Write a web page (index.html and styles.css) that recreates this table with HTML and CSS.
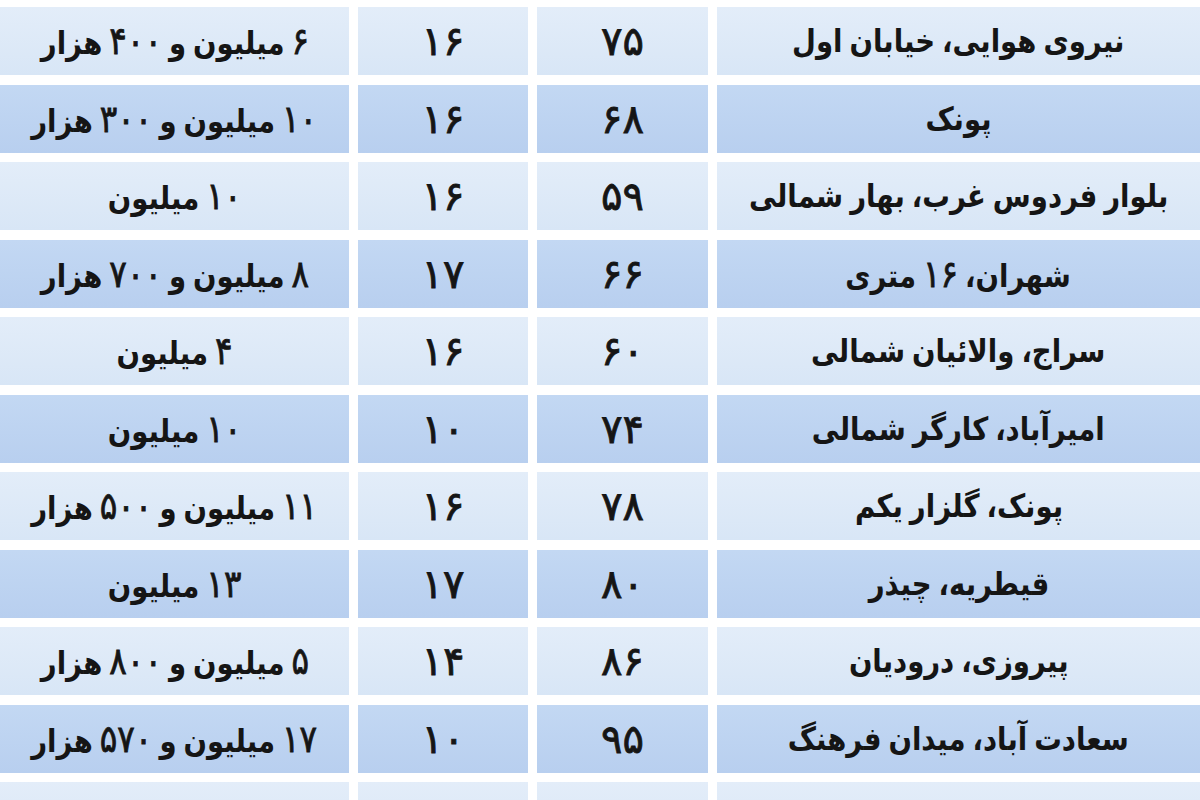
FILE: index.html
```html
<!DOCTYPE html>
<html lang="fa" dir="rtl">
<head>
<meta charset="utf-8">
<title>جدول اجاره</title>
<link rel="stylesheet" href="styles.css">
</head>
<body>
<div class="table">
  <div class="row light"><div class="cell"><span class="t">نیروی هوایی، خیابان اول</span></div><div class="cell"><span class="n">۷۵</span></div><div class="cell"><span class="n">۱۶</span></div><div class="cell"><span class="t"><span class="n">۶</span> میلیون و <span class="n">۴۰۰</span> هزار</span></div></div>
  <div class="row dark"><div class="cell"><span class="t">پونک</span></div><div class="cell"><span class="n">۶۸</span></div><div class="cell"><span class="n">۱۶</span></div><div class="cell"><span class="t"><span class="n">۱۰</span> میلیون و <span class="n">۳۰۰</span> هزار</span></div></div>
  <div class="row light"><div class="cell"><span class="t">بلوار فردوس غرب، بهار شمالی</span></div><div class="cell"><span class="n">۵۹</span></div><div class="cell"><span class="n">۱۶</span></div><div class="cell"><span class="t"><span class="n">۱۰</span> میلیون</span></div></div>
  <div class="row dark"><div class="cell"><span class="t">شهران، <span class="n">۱۶</span> متری</span></div><div class="cell"><span class="n">۶۶</span></div><div class="cell"><span class="n">۱۷</span></div><div class="cell"><span class="t"><span class="n">۸</span> میلیون و <span class="n">۷۰۰</span> هزار</span></div></div>
  <div class="row light"><div class="cell"><span class="t">سراج، والائیان شمالی</span></div><div class="cell"><span class="n">۶۰</span></div><div class="cell"><span class="n">۱۶</span></div><div class="cell"><span class="t"><span class="n">۴</span> میلیون</span></div></div>
  <div class="row dark"><div class="cell"><span class="t">امیرآباد، کارگر شمالی</span></div><div class="cell"><span class="n">۷۴</span></div><div class="cell"><span class="n">۱۰</span></div><div class="cell"><span class="t"><span class="n">۱۰</span> میلیون</span></div></div>
  <div class="row light"><div class="cell"><span class="t">پونک، گلزار یکم</span></div><div class="cell"><span class="n">۷۸</span></div><div class="cell"><span class="n">۱۶</span></div><div class="cell"><span class="t"><span class="n">۱۱</span> میلیون و <span class="n">۵۰۰</span> هزار</span></div></div>
  <div class="row dark"><div class="cell"><span class="t">قیطریه، چیذر</span></div><div class="cell"><span class="n">۸۰</span></div><div class="cell"><span class="n">۱۷</span></div><div class="cell"><span class="t"><span class="n">۱۳</span> میلیون</span></div></div>
  <div class="row light"><div class="cell"><span class="t">پیروزی، درودیان</span></div><div class="cell"><span class="n">۸۶</span></div><div class="cell"><span class="n">۱۴</span></div><div class="cell"><span class="t"><span class="n">۵</span> میلیون و <span class="n">۸۰۰</span> هزار</span></div></div>
  <div class="row dark"><div class="cell"><span class="t">سعادت آباد، میدان فرهنگ</span></div><div class="cell"><span class="n">۹۵</span></div><div class="cell"><span class="n">۱۰</span></div><div class="cell"><span class="t"><span class="n">۱۷</span> میلیون و <span class="n">۵۷۰</span> هزار</span></div></div>
  <div class="row light"><div class="cell"></div><div class="cell"></div><div class="cell"></div><div class="cell"></div></div>
</div>
</body>
</html>
```
FILE: styles.css
```css
html, body {
  margin: 0;
  padding: 0;
  background: #ffffff;
  height: 800px;
  overflow: hidden;
}
body {
  font-family: "DejaVu Sans", "Noto Sans", sans-serif;
  color: #151515;
  direction: rtl;
}
.table {
  display: flex;
  flex-direction: column;
  gap: 9.5px;
  padding-top: 7px;
  width: 1200px;
}
.row {
  display: grid;
  grid-template-columns: 483px 171px 170px 349px;
  column-gap: 9px;
  height: 68px;
}
.cell {
  display: flex;
  align-items: center;
  justify-content: center;
  font-weight: bold;
  font-size: 32px;
  white-space: nowrap;
  overflow: hidden;
}
.t {
  display: inline-block;
  font-size: 32px;
  word-spacing: -3px;
  transform: scaleX(0.86);
  line-height: 1;
}
.n {
  font-size: 40px;
  font-weight: normal;
  -webkit-text-stroke: 0.8px #151515;
  line-height: 1;
}
.t .n {
  font-size: 38px;
}
.light .cell {
  background: linear-gradient(#e3edf9, #d8e6f6);
}
.dark .cell {
  background: linear-gradient(#c3d8f3, #b8cfef);
}
```
